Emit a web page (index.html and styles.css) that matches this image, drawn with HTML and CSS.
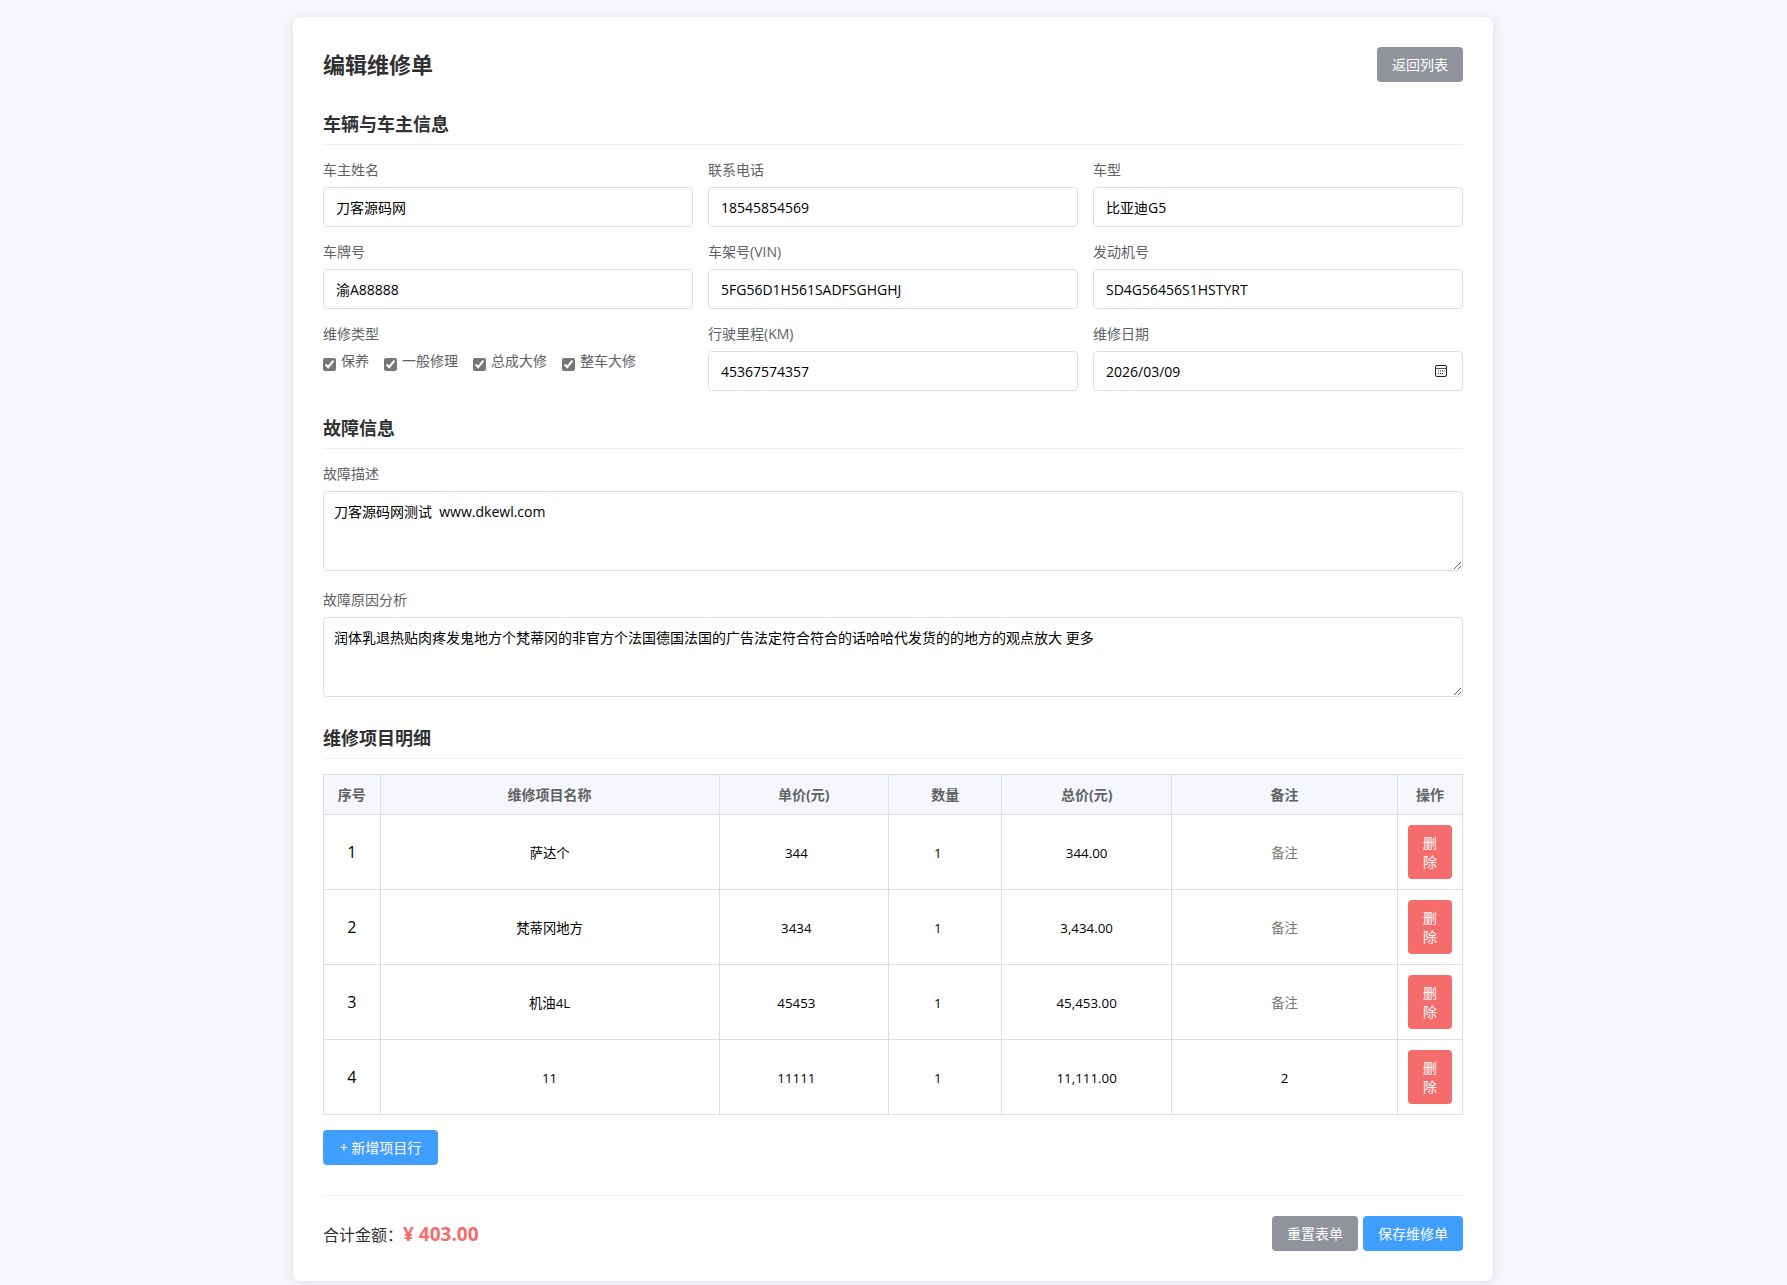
FILE: index.html
```html
<!DOCTYPE html>
<html lang="zh-CN">
<head>
  <meta charset="UTF-8">
  <meta name="viewport" content="width=device-width, initial-scale=1.0">
  <title>编辑维修单</title>
  <link rel="stylesheet" href="styles.css">
</head>
<body>
  <form class="container" id="repairForm">
    <div class="header">
      <h2>编辑维修单</h2>
      <button type="button" class="btn btn-gray">返回列表</button>
    </div>

    <div class="section">
      <h3 class="section-title">车辆与车主信息</h3>
      <div class="form-grid">
        <div class="form-item">
          <label for="ownerName">车主姓名</label>
          <input type="text" id="ownerName" value="刀客源码网">
        </div>
        <div class="form-item">
          <label for="phone">联系电话</label>
          <input type="text" id="phone" value="18545854569">
        </div>
        <div class="form-item">
          <label for="carModel">车型</label>
          <input type="text" id="carModel" value="比亚迪G5">
        </div>
        <div class="form-item">
          <label for="plateNo">车牌号</label>
          <input type="text" id="plateNo" value="渝A88888">
        </div>
        <div class="form-item">
          <label for="vin">车架号(VIN)</label>
          <input type="text" id="vin" value="5FG56D1H561SADFSGHGHJ">
        </div>
        <div class="form-item">
          <label for="engineNo">发动机号</label>
          <input type="text" id="engineNo" value="SD4G56456S1HSTYRT">
        </div>
        <div class="form-item" role="group" aria-labelledby="typeLabel">
          <span class="label" id="typeLabel">维修类型</span>
          <div class="checkbox-group">
            <label><input type="checkbox" checked>保养</label>
            <label><input type="checkbox" checked>一般修理</label>
            <label><input type="checkbox" checked>总成大修</label>
            <label><input type="checkbox" checked>整车大修</label>
          </div>
        </div>
        <div class="form-item">
          <label for="mileage">行驶里程(KM)</label>
          <input type="number" id="mileage" value="45367574357">
        </div>
        <div class="form-item">
          <label for="repairDate">维修日期</label>
          <div class="date-box">
            <input type="text" id="repairDate" value="2026/03/09">
            <button type="button" class="date-btn" aria-label="选择日期">
              <svg width="14" height="14" viewBox="0 0 14 14" fill="none" stroke="#222">
                <rect x="1.5" y="1.5" width="11" height="11" rx="1.5"/>
                <path d="M2 4.5h10" stroke="#555"/>
                <path d="M6 7h1M8 7h1M10 7h1M4 9.5h1M6 9.5h1M8 9.5h1M4 7h1" stroke-width="1.2"/>
              </svg>
            </button>
          </div>
        </div>
      </div>
    </div>

    <div class="section">
      <h3 class="section-title">故障信息</h3>
      <div class="form-stack">
        <div class="form-item">
          <label for="faultDesc">故障描述</label>
          <textarea id="faultDesc">刀客源码网测试  www.dkewl.com</textarea>
        </div>
        <div class="form-item">
          <label for="faultReason">故障原因分析</label>
          <textarea id="faultReason">润体乳退热贴肉疼发鬼地方个梵蒂冈的非官方个法国德国法国的广告法定符合符合的话哈哈代发货的的地方的观点放大 更多</textarea>
        </div>
      </div>
    </div>

    <div class="section">
      <h3 class="section-title">维修项目明细</h3>
      <table class="item-table">
        <thead>
          <tr>
            <th class="w-5">序号</th>
            <th class="w-30">维修项目名称</th>
            <th class="w-15">单价(元)</th>
            <th class="w-10">数量</th>
            <th class="w-15">总价(元)</th>
            <th class="w-20">备注</th>
            <th class="w-5">操作</th>
          </tr>
        </thead>
        <tbody>
          <tr>
            <td>1</td>
            <td><input type="text" aria-label="维修项目名称" value="萨达个"></td>
            <td><input type="number" aria-label="单价" value="344"></td>
            <td><input type="number" aria-label="数量" value="1"></td>
            <td><input type="text" aria-label="总价" value="344.00" readonly></td>
            <td><input type="text" aria-label="备注" placeholder="备注"></td>
            <td><button type="button" class="btn btn-red">删除</button></td>
          </tr>
          <tr>
            <td>2</td>
            <td><input type="text" aria-label="维修项目名称" value="梵蒂冈地方"></td>
            <td><input type="number" aria-label="单价" value="3434"></td>
            <td><input type="number" aria-label="数量" value="1"></td>
            <td><input type="text" aria-label="总价" value="3,434.00" readonly></td>
            <td><input type="text" aria-label="备注" placeholder="备注"></td>
            <td><button type="button" class="btn btn-red">删除</button></td>
          </tr>
          <tr>
            <td>3</td>
            <td><input type="text" aria-label="维修项目名称" value="机油4L"></td>
            <td><input type="number" aria-label="单价" value="45453"></td>
            <td><input type="number" aria-label="数量" value="1"></td>
            <td><input type="text" aria-label="总价" value="45,453.00" readonly></td>
            <td><input type="text" aria-label="备注" placeholder="备注"></td>
            <td><button type="button" class="btn btn-red">删除</button></td>
          </tr>
          <tr>
            <td>4</td>
            <td><input type="text" aria-label="维修项目名称" value="11"></td>
            <td><input type="number" aria-label="单价" value="11111"></td>
            <td><input type="number" aria-label="数量" value="1"></td>
            <td><input type="text" aria-label="总价" value="11,111.00" readonly></td>
            <td><input type="text" aria-label="备注" placeholder="备注" value="2"></td>
            <td><button type="button" class="btn btn-red">删除</button></td>
          </tr>
        </tbody>
      </table>
      <button type="button" class="btn btn-blue btn-add">+ 新增项目行</button>
    </div>

    <div class="footer">
      <div class="total">合计金额：<span class="total-amount">¥ 403.00</span></div>
      <div class="footer-btns">
        <button type="reset" class="btn btn-gray">重置表单</button>
        <button type="submit" class="btn btn-blue">保存维修单</button>
      </div>
    </div>
  </form>
</body>
</html>
```

FILE: styles.css
```css
* {
  margin: 0;
  padding: 0;
  box-sizing: border-box;
  font-family: "Open Sans", "Noto Sans CJK SC", sans-serif;
}

body {
  background: #f5f7fa;
  padding: 17px 21px 4px 20px;
}

.container {
  max-width: 1200px;
  margin: 0 auto;
  padding: 30px;
  background: #fff;
  border-radius: 8px;
  box-shadow: 0 2px 12px rgba(0, 0, 0, 0.1);
}

.header {
  display: flex;
  justify-content: space-between;
  align-items: center;
  margin-bottom: 30px;
}

.header h2 {
  font-size: 22px;
  line-height: 28px;
  padding-bottom: 2px;
  color: #303133;
}

.section {
  margin-bottom: 25px;
}

.section-title {
  font-size: 18px;
  line-height: 24px;
  color: #303133;
  padding-bottom: 8px;
  margin-bottom: 15px;
  border-bottom: 1px solid #ebeef5;
}

/* buttons */
.btn {
  padding: 8px 15px;
  border: none;
  border-radius: 4px;
  font-size: 14px;
  line-height: 19px;
  color: #fff;
  cursor: pointer;
}

.btn-blue {
  background: #409eff;
}

.btn-gray {
  background: #909399;
}

.btn-red {
  background: #f56c6c;
}

.btn-add {
  min-width: 115px;
}

/* form */
.form-grid {
  display: grid;
  grid-template-columns: repeat(3, 1fr);
  gap: 15px;
}

.form-stack {
  display: grid;
  gap: 15px;
}

.form-item label,
.form-item .label {
  display: block;
  font-size: 14px;
  line-height: 19px;
  color: #606266;
  margin-bottom: 8px;
}

.form-item input[type="text"],
.form-item input[type="number"] {
  display: block;
  width: 100%;
  height: 40px;
  padding: 0 12px;
  border: 1px solid #dcdfe6;
  border-radius: 4px;
  font-size: 14px;
  outline: none;
}

.form-item textarea {
  display: block;
  width: 100%;
  height: 80px;
  padding: 10px;
  margin-bottom: 4px;
  border: 1px solid #dcdfe6;
  border-radius: 4px;
  font-size: 14px;
  line-height: 19px;
  resize: vertical;
  outline: none;
}

.checkbox-group {
  display: flex;
  flex-wrap: wrap;
  gap: 15px;
}

.checkbox-group label {
  display: flex;
  align-items: flex-start;
  margin-bottom: 0;
}

.checkbox-group input {
  width: 13px;
  height: 13px;
  margin: 7px 5px 0 0;
  accent-color: #767676;
}

.date-box {
  display: flex;
  align-items: center;
  height: 40px;
  padding-right: 14px;
  border: 1px solid #dcdfe6;
  border-radius: 4px;
}

.form-item .date-box input {
  flex: 1;
  height: 38px;
  border: none;
}

.date-btn {
  display: flex;
  border: none;
  background: none;
  cursor: pointer;
}

/* item table */
.item-table {
  width: 100%;
  border-collapse: collapse;
  margin-bottom: 15px;
}

.item-table th,
.item-table td {
  border: 1px solid #dcdfe6;
  padding: 10px;
  text-align: center;
}

.item-table th {
  background: #f5f7fa;
  color: #606266;
  font-size: 14px;
  line-height: 19px;
}

.item-table input {
  width: 100%;
  border: none;
  outline: none;
  text-align: center;
  background: none;
}

.item-table .btn {
  display: block;
}

.w-5 { width: 5%; }
.w-10 { width: 10%; }
.w-15 { width: 15%; }
.w-20 { width: 20%; }
.w-30 { width: 30%; }

/* footer */
.footer {
  display: flex;
  justify-content: space-between;
  align-items: center;
  margin-top: 30px;
  padding-top: 20px;
  border-top: 1px solid #ebeef5;
}

.total {
  font-size: 16px;
  line-height: 24px;
  padding-top: 2px;
  color: #303133;
}

.total-amount {
  font-size: 19px;
  font-weight: bold;
  color: #f56c6c;
}

.footer-btns {
  display: flex;
  gap: 5px;
}
```
